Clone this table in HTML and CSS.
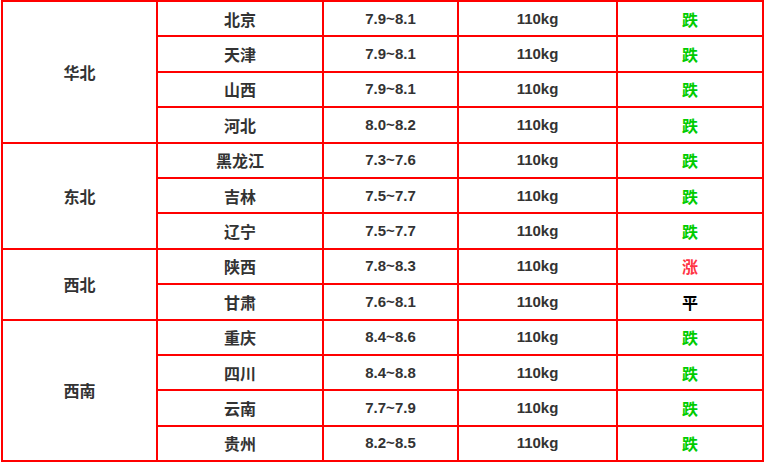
FILE: index.html
```html
<!DOCTYPE html>
<html>
<head>
<meta charset="utf-8">
<link rel="stylesheet" href="styles.css">
</head>
<body>
<table class="price">
<colgroup>
<col class="c1"><col class="c2"><col class="c3"><col class="c4"><col class="c5">
</colgroup>
<tbody>
<tr><td rowspan="4" class="region">华北</td><td>北京</td><td class="num">7.9~8.1</td><td class="num">110kg</td><td class="down">跌</td></tr>
<tr><td>天津</td><td class="num">7.9~8.1</td><td class="num">110kg</td><td class="down">跌</td></tr>
<tr><td>山西</td><td class="num">7.9~8.1</td><td class="num">110kg</td><td class="down">跌</td></tr>
<tr><td>河北</td><td class="num">8.0~8.2</td><td class="num">110kg</td><td class="down">跌</td></tr>
<tr><td rowspan="3" class="region">东北</td><td>黑龙江</td><td class="num">7.3~7.6</td><td class="num">110kg</td><td class="down">跌</td></tr>
<tr><td>吉林</td><td class="num">7.5~7.7</td><td class="num">110kg</td><td class="down">跌</td></tr>
<tr><td>辽宁</td><td class="num">7.5~7.7</td><td class="num">110kg</td><td class="down">跌</td></tr>
<tr><td rowspan="2" class="region">西北</td><td>陕西</td><td class="num">7.8~8.3</td><td class="num">110kg</td><td class="up">涨</td></tr>
<tr><td>甘肃</td><td class="num">7.6~8.1</td><td class="num">110kg</td><td class="flat">平</td></tr>
<tr><td rowspan="4" class="region">西南</td><td>重庆</td><td class="num">8.4~8.6</td><td class="num">110kg</td><td class="down">跌</td></tr>
<tr><td>四川</td><td class="num">8.4~8.8</td><td class="num">110kg</td><td class="down">跌</td></tr>
<tr><td>云南</td><td class="num">7.7~7.9</td><td class="num">110kg</td><td class="down">跌</td></tr>
<tr><td>贵州</td><td class="num">8.2~8.5</td><td class="num">110kg</td><td class="down">跌</td></tr>
</tbody>
</table>
</body>
</html>
```
FILE: styles.css
```css
html, body {
  margin: 0;
  padding: 0;
  background: #fff;
}
.price {
  margin-left: 1px;
  border-collapse: collapse;
  table-layout: fixed;
  width: 761px;
  font-family: "Noto Sans CJK SC", "Liberation Sans", sans-serif;
  font-weight: bold;
  font-size: 16px;
  color: #333;
}
.c1 { width: 155px; }
.c2 { width: 166px; }
.c3 { width: 135px; }
.c4 { width: 159px; }
.c5 { width: 146px; }
.price td {
  border: 2px solid #ff0000;
  text-align: center;
  vertical-align: middle;
  padding: 0;
  height: 33.4px;
  line-height: 20px;
}
.price td.num {
  font-family: "Liberation Sans", Arial, sans-serif;
  font-size: 15px;
}
.down { color: #00cc00; }
.up { color: #ff3344; }
.flat { color: #000; }
```
